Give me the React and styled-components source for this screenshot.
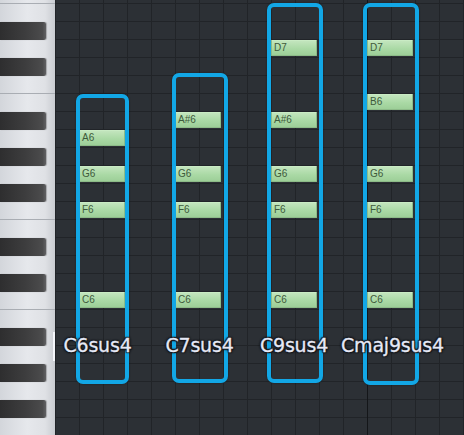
import React from "react";
import styled, { createGlobalStyle } from "styled-components";

const ROW = 18;
const OFFSET = 4;
const COL = 24;
const KEYS_W = 55;

const Global = createGlobalStyle`
  html, body { margin: 0; padding: 0; background: #2b2f33; }
  #root { width: 464px; height: 435px; overflow: hidden; }
`;

const Roll = styled.div`
  position: relative;
  display: flex;
  width: 464px;
  height: 435px;
  overflow: hidden;
  font-family: "DejaVu Sans", "Liberation Sans", sans-serif;
`;

const Keyboard = styled.div`
  flex: none;
  width: ${KEYS_W}px;
  overflow: hidden;
  background: linear-gradient(to right, #d3d6db 0%, #e6e8ec 50%, #dfe1e5 82%, #c9ccd1 100%);
`;

const Keys = styled.div`
  display: flex;
  flex-direction: column;
  margin-top: ${OFFSET - ROW}px;
`;

const KeyRow = styled.div`
  box-sizing: border-box;
  height: ${ROW}px;
  display: flex;
  border-bottom: ${(p) => (p.$split ? "1px solid #a9adb3" : "0")};
`;

const BlackKey = styled.div`
  width: 46px;
  height: ${ROW}px;
  border-radius: 0 2px 2px 0;
  background: linear-gradient(to right, #2e2e2f 0%, #3d3d3e 55%, #4b4b4c 92%, #616163 100%);
  box-shadow: 1px 0 1px rgba(0, 0, 0, 0.25);
`;

const Caret = styled.div`
  position: absolute;
  left: 53px;
  top: 332px;
  width: 2px;
  height: 29px;
  background: #f4f6fa;
`;

const Grid = styled.div`
  position: relative;
  flex: 1;
  background-color: #2c3035;
  background-image: linear-gradient(to bottom, #212428 1px, transparent 1px),
    linear-gradient(to right, #212428 1px, transparent 1px);
  background-size: 100% ${ROW}px, ${COL}px 100%;
  background-position: 0 ${OFFSET - 1}px, 0 0;
`;

const BarLine = styled.div`
  position: absolute;
  top: 0;
  bottom: 0;
  left: ${(p) => p.$col * COL}px;
  width: 1px;
  background: #141619;
`;

const Note = styled.div`
  position: absolute;
  box-sizing: border-box;
  width: 46px;
  height: 16px;
  padding-left: 2px;
  border: 1px solid #8dbb88;
  border-top-color: #c9ebc4;
  border-radius: 1px;
  background: linear-gradient(to bottom, #c2e5bd 0%, #aad9a5 55%, #9dcf98 100%);
  color: #3e5a3b;
  font-family: "Liberation Sans Narrow", "Liberation Sans", sans-serif;
  font-size: 10px;
  line-height: 14px;
`;

const ChordBox = styled.div`
  position: absolute;
  box-sizing: border-box;
  border: 4px solid #12a7e6;
  border-radius: 7px;
  box-shadow: 0 0 2px rgba(0, 0, 0, 0.45);
`;

const Label = styled.div`
  position: absolute;
  top: 336px;
  transform: translateX(-50%);
  white-space: nowrap;
  font-size: 19px;
  line-height: 19px;
  color: #e6e9f6;
  letter-spacing: -0.2px;
  -webkit-text-stroke: 0.3px #e6e9f6;
  text-shadow: 0 0 2px #12151a, 1px 1px 1px #12151a, -1px -1px 1px #1b1e24,
    1px -1px 1px #1b1e24, -1px 1px 1px #1b1e24, 0 0 3px rgba(10, 12, 16, 0.8);
`;

const KEY_ROWS = [
  "F7", "E7", "D#7", "D7", "C#7", "C7", "B6", "A#6", "A6", "G#6", "G6", "F#6", "F6",
  "E6", "D#6", "D6", "C#6", "C6", "B5", "A#5", "A5", "G#5", "G5", "F#5", "F5", "E5",
];

const isSplit = (k) => !k.includes("#") && (k.startsWith("F") || k.startsWith("C"));

const CHORDS = [
  {
    col: 1,
    label: "C6sus4",
    cx: 97.5,
    box: { left: 21, top: 94, w: 53, h: 290 },
    notes: [["A6", 7], ["G6", 9], ["F6", 11], ["C6", 16]],
  },
  {
    col: 5,
    label: "C7sus4",
    cx: 199.5,
    box: { left: 117, top: 73, w: 56, h: 310 },
    notes: [["A#6", 6], ["G6", 9], ["F6", 11], ["C6", 16]],
  },
  {
    col: 9,
    label: "C9sus4",
    cx: 294,
    box: { left: 212, top: 3, w: 56, h: 380 },
    notes: [["D7", 2], ["A#6", 6], ["G6", 9], ["F6", 11], ["C6", 16]],
  },
  {
    col: 13,
    label: "Cmaj9sus4",
    cx: 392.5,
    box: { left: 308, top: 3, w: 56, h: 382 },
    notes: [["D7", 2], ["B6", 5], ["G6", 9], ["F6", 11], ["C6", 16]],
  },
];

export default function App() {
  return (
    <>
      <Global />
      <Roll>
        <Keyboard>
          <Keys>
            {KEY_ROWS.map((k) => (
              <KeyRow key={k} $split={isSplit(k)}>
                {k.includes("#") && <BlackKey />}
              </KeyRow>
            ))}
          </Keys>
        </Keyboard>
        <Grid>
          <BarLine $col={13} />
          {CHORDS.map((c) =>
            c.notes.map(([name, row]) => (
              <Note
                key={c.label + name}
                style={{ left: c.col * COL, top: OFFSET + row * ROW }}
              >
                {name}
              </Note>
            ))
          )}
          {CHORDS.map((c) => (
            <ChordBox
              key={c.label}
              style={{ left: c.box.left, top: c.box.top, width: c.box.w, height: c.box.h }}
            />
          ))}
          {CHORDS.map((c) => (
            <Label key={c.label + "-l"} style={{ left: c.cx - KEYS_W }}>
              {c.label}
            </Label>
          ))}
        </Grid>
        <Caret />
      </Roll>
    </>
  );
}
